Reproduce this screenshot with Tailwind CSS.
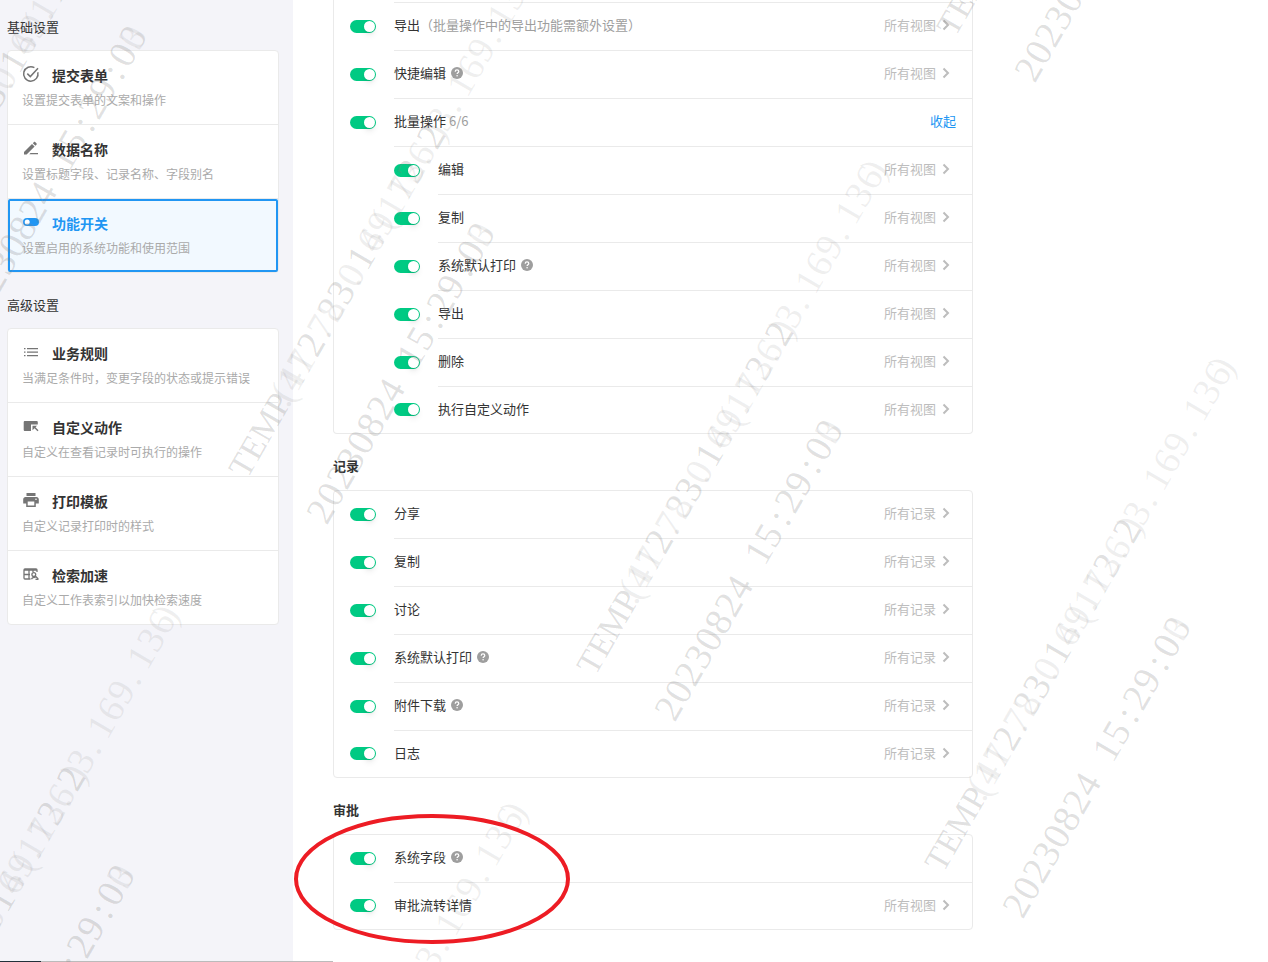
<!DOCTYPE html>
<html lang="zh-CN">
<head>
  <meta charset="UTF-8" />
  <meta name="viewport" content="width=device-width, initial-scale=1.0" />
  <title>功能开关</title>
  <!-- 引入 Tailwind CSS -->
  <script src="https://cdn.jsdelivr.net/npm/@tailwindcss/browser@4"></script>
</head>
<body class="relative min-h-screen flex overflow-x-hidden bg-white text-[13px] leading-5 text-[#333] font-['Noto_Sans_CJK_SC',sans-serif]">
  <!-- 左侧设置导航 -->
  <aside class="w-[293px] shrink-0 bg-[#f4f4f9] pl-[7px] pr-[14px] pt-[17px]">
    <h2 class="mb-[13px]">基础设置</h2>
    <nav class="border border-[#eaeaea] rounded bg-white">
      <a href="#submit" class="block h-[74px] pt-[14px] pl-[14px] border-b border-[#eaeaea]">
        <span class="flex items-center gap-3">
          <svg class="size-[18px] -mt-[2px]" viewBox="0 0 18 18" fill="none" stroke="#757575" stroke-width="1.5">
            <path d="M15.8 7.2A7.2 7.2 0 1 1 12.4 2.7" />
            <path d="M5.3 8.6l3 3L16 3.2" />
          </svg>
          <b class="text-sm">提交表单</b>
        </span>
        <span class="block mt-[5px] text-xs leading-5 text-[#aaa]">设置提交表单的文案和操作</span>
      </a>
      <a href="#naming" class="block h-[74px] pt-[14px] pl-[14px] border-b border-[#eaeaea]">
        <span class="flex items-center gap-3">
          <svg class="size-[18px] -mt-[2px]" viewBox="0 0 18 18" fill="#757575">
            <path d="M2 13l8-8 2.600 2.600-8 8H2zM10.800 4.200l1.200-1.200c.3-.3.8-.3 1.100 0l1.500 1.500c.3.3.3.8 0 1.100l-1.200 1.200zM8.500 14h7.500v1.200H7.300z" />
          </svg>
          <b class="text-sm">数据名称</b>
        </span>
        <span class="block mt-[5px] text-xs leading-5 text-[#aaa]">设置标题字段、记录名称、字段别名</span>
      </a>
      <a href="#switch" class="block h-[73px] pt-3 pl-3 border-2 border-[#2196f3] rounded-xs bg-[#f2f9ff]">
        <span class="flex items-center gap-3">
          <svg class="size-[18px] -mt-[2px]" viewBox="0 0 18 18">
            <rect x="1" y="5" width="16" height="8" rx="4" fill="#2196f3" />
            <circle cx="5.200" cy="9" r="2.500" fill="#fff" />
          </svg>
          <b class="text-sm text-[#2196f3]">功能开关</b>
        </span>
        <span class="block mt-[5px] text-xs leading-5 text-[#aaa]">设置启用的系统功能和使用范围</span>
      </a>
    </nav>

    <h2 class="mt-[22px] mb-[13px]">高级设置</h2>
    <nav class="border border-[#eaeaea] rounded bg-white">
      <a href="#rules" class="block h-[74px] pt-[14px] pl-[14px] border-b border-[#eaeaea]">
        <span class="flex items-center gap-3">
          <svg class="size-[18px] -mt-[2px]" viewBox="0 0 18 18" fill="#757575">
            <path d="M2 5h1.500v1.300H2zM2 8.500h1.500v1.300H2zM2 12h1.500v1.300H2zM5 5h11v1.300H5zM5 8.500h11v1.300H5zM5 12h11v1.300H5z" />
          </svg>
          <b class="text-sm">业务规则</b>
        </span>
        <span class="block mt-[5px] text-xs leading-5 text-[#aaa]">当满足条件时，变更字段的状态或提示错误</span>
      </a>
      <a href="#actions" class="block h-[74px] pt-[14px] pl-[14px] border-b border-[#eaeaea]">
        <span class="flex items-center gap-3">
          <svg class="size-[18px] -mt-[2px]" viewBox="0 0 18 18" fill="#757575">
            <path d="M3 4h11.500c.8 0 1.300.5 1.300 1.300V7.500H9V14H3c-.8 0-1.300-.5-1.300-1.300V5.300C1.700 4.500 2.200 4 3 4z" />
            <path d="M10.500 8.700h4.600l-1.600 1.600 3 3-1 1-3-3-2 2z" />
          </svg>
          <b class="text-sm">自定义动作</b>
        </span>
        <span class="block mt-[5px] text-xs leading-5 text-[#aaa]">自定义在查看记录时可执行的操作</span>
      </a>
      <a href="#print" class="block h-[74px] pt-[14px] pl-[14px] border-b border-[#eaeaea]">
        <span class="flex items-center gap-3">
          <svg class="size-[18px] -mt-[2px]" viewBox="0 0 18 18" fill="#757575">
            <path d="M4.500 2h9v3h-9zM3.500 6h11c1.300 0 2.300 1 2.300 2.300v4.200h-3V16H4.200v-3.500h-3V8.300C1.200 7 2.200 6 3.500 6zM5.700 10.500v4h6.600v-4zM14 7.500a.8.8 0 1 0 0 1.600.8.8 0 0 0 0-1.600z" fill-rule="evenodd" />
          </svg>
          <b class="text-sm">打印模板</b>
        </span>
        <span class="block mt-[5px] text-xs leading-5 text-[#aaa]">自定义记录打印时的样式</span>
      </a>
      <a href="#index" class="block h-[73px] pt-[14px] pl-[14px]">
        <span class="flex items-center gap-3">
          <svg class="size-[18px] -mt-[2px]" viewBox="0 0 18 18" fill="none" stroke="#757575" stroke-width="1.300">
            <path d="M8.500 14H3c-.6 0-1-.4-1-1V5c0-.6.4-1 1-1h11c.6 0 1 .4 1 1v2M2 5h13M2 9.500h6M7 5v9M11 5v2" />
            <circle cx="11.800" cy="9.500" r="1.900" />
            <path d="M9.500 14.200c.5-1.500 2.500-2.300 4-1.500M13 10.700l3.300 3.300M13.500 14.300h3" />
          </svg>
          <b class="text-sm">检索加速</b>
        </span>
        <span class="block mt-[5px] text-xs leading-5 text-[#aaa]">自定义工作表索引以加快检索速度</span>
      </a>
    </nav>
  </aside>

  <!-- 右侧功能开关列表 -->
  <main class="flex-1 pl-10 pr-4">
    <div class="max-w-[640px]">
      <section class="border-x border-b border-[#eaeaea] rounded-b">
        <div class="ml-[60px] h-[3px] border-b border-[#eaeaea]"></div>
        <div id="viewList"></div>
      </section>
      <h3 class="h-14 pt-2 flex items-center font-bold">记录</h3>
      <section id="recordList" class="border border-[#eaeaea] rounded"></section>
      <h3 class="h-14 pt-2 flex items-center font-bold">审批</h3>
      <section id="approvalList" class="border border-[#eaeaea] rounded"></section>
    </div>
  </main>

  <!-- 底部进度条 -->
  <div class="absolute left-0 bottom-0 w-[333px] h-px bg-[#bbb]">
    <div class="w-[41px] h-px bg-[#22303a]"></div>
  </div>

  <!-- 水印和圈注 -->
  <svg class="absolute inset-0 w-full h-full pointer-events-none font-['Liberation_Serif',serif]" aria-hidden="true">
    <defs>
      <g id="mark" fill="#808080" fill-opacity="0.13" font-size="38">
        <text font-size="34">TEMP</text>
        <text font-size="34">TEMP</text>
        <text><tspan x="87">(</tspan><tspan x="100 120 140 160 180 200 220 240 260 280 300 320 340 360 380">412783016917362</tspan><tspan x="390">)</tspan></text>
        <text><tspan x="82">.</tspan><tspan x="100 120 140">172</tspan><tspan x="162">.</tspan><tspan x="180 200">23</tspan><tspan x="222">.</tspan><tspan x="240 260">14</tspan><tspan x="287">(</tspan><tspan x="302">.</tspan><tspan x="320 340">12</tspan><tspan x="362">.</tspan><tspan x="380 400">23</tspan><tspan x="422">.</tspan><tspan x="440 460 480">169</tspan><tspan x="502">.</tspan><tspan x="520 540 560">136</tspan><tspan x="574">)</tspan></text>
        <text y="92"><tspan x="0 20 40 60 80 100 120 140">20230824</tspan><tspan x="180 200">15</tspan><tspan x="225">:</tspan><tspan x="240 260">29</tspan><tspan x="285">:</tspan><tspan x="300 320">00</tspan></text>
        <text y="92"><tspan x="0 20 40 60 80 100 120 140">20230824</tspan><tspan x="180 200">15</tspan><tspan x="225">:</tspan><tspan x="240 260">29</tspan><tspan x="285">:</tspan><tspan x="300 320">03</tspan></text>
      </g>
    </defs>
    <use href="#mark" transform="translate(-101 283) rotate(-60)" />
    <use href="#mark" transform="translate(247 480) rotate(-60)" />
    <use href="#mark" transform="translate(595 677) rotate(-60)" />
    <use href="#mark" transform="translate(943 874) rotate(-60)" />
    <use href="#mark" transform="translate(955 38) rotate(-60)" />
    <use href="#mark" transform="translate(-113 1122) rotate(-60)" />
    <use href="#mark" transform="translate(235 1319) rotate(-60)" />
    <ellipse cx="432" cy="879" rx="136" ry="63" fill="none" stroke="#ed1c24" stroke-width="4" />
  </svg>

  <script>
    // sub 表示批量操作下的子项，help 表示带问号提示
    const viewItems = [
      { name: '导出', note: '（批量操作中的导出功能需额外设置）', scope: '所有视图' },
      { name: '快捷编辑', help: true, scope: '所有视图' },
      { name: '批量操作', note: ' 6/6', toggle: '收起' },
      { name: '编辑', sub: true, scope: '所有视图' },
      { name: '复制', sub: true, scope: '所有视图' },
      { name: '系统默认打印', sub: true, help: true, scope: '所有视图' },
      { name: '导出', sub: true, scope: '所有视图' },
      { name: '删除', sub: true, scope: '所有视图' },
      { name: '执行自定义动作', sub: true, scope: '所有视图' }
    ];
    const recordItems = [
      { name: '分享', scope: '所有记录' },
      { name: '复制', scope: '所有记录' },
      { name: '讨论', scope: '所有记录' },
      { name: '系统默认打印', help: true, scope: '所有记录' },
      { name: '附件下载', help: true, scope: '所有记录' },
      { name: '日志', scope: '所有记录' }
    ];
    const approvalItems = [
      { name: '系统字段', help: true },
      { name: '审批流转详情', scope: '所有视图' }
    ];

    const helpIcon = `<svg class="size-3 ml-[5px]" viewBox="0 0 12 12"><circle cx="6" cy="6" r="6" fill="#9e9e9e" /><path d="M4.200 4.700C4.200 3.500 5 2.900 6 2.900s1.800.6 1.800 1.600c0 1.200-1.700 1.300-1.700 2.500" fill="none" stroke="#fff" stroke-width="1.200" /><circle cx="6.100" cy="8.800" r=".8" fill="#fff" /></svg>`;
    const arrowIcon = `<svg class="w-2 h-3 ml-[6px] mr-[6px]" viewBox="0 0 8 12" fill="none" stroke="#bdbdbd" stroke-width="2"><path d="M1.500 1.500L6 6l-4.500 4.500" /></svg>`;

    // 渲染一组开关
    function renderList(id, items) {
      document.getElementById(id).innerHTML = items.map((item, i) => {
        const key = id + i;
        let right = '';
        if (item.scope) {
          right = `<button type="button" class="flex items-center text-[#bdbdbd]">${item.scope}${arrowIcon}</button>`;
        } else if (item.toggle) {
          right = `<button type="button" class="text-[#2196f3]">${item.toggle}</button>`;
        }
        return `
          <div class="group flex items-center ${item.sub ? 'pl-[60px]' : 'pl-4'}">
            <input type="checkbox" id="${key}" checked class="appearance-none shrink-0 w-[26px] h-[13px] mb-[2px] mr-[18px] rounded-full bg-[#bdbdbd] checked:bg-[#00ca83] before:block before:size-[11px] before:mt-px before:ml-px before:rounded-full before:bg-white before:shadow-md checked:before:ml-[14px]">
            <div class="flex-1 h-12 group-last:h-[46px] pr-4 pb-1 group-last:pb-[2px] flex items-center justify-between border-b border-[#eaeaea] group-last:border-b-0">
              <label for="${key}" class="flex items-center whitespace-pre">${item.name}${item.note ? `<span class="text-[#9e9e9e]">${item.note}</span>` : ''}${item.help ? helpIcon : ''}</label>
              ${right}
            </div>
          </div>`;
      }).join('');
    }

    renderList('viewList', viewItems);
    renderList('recordList', recordItems);
    renderList('approvalList', approvalItems);
  </script>
</body>
</html>
